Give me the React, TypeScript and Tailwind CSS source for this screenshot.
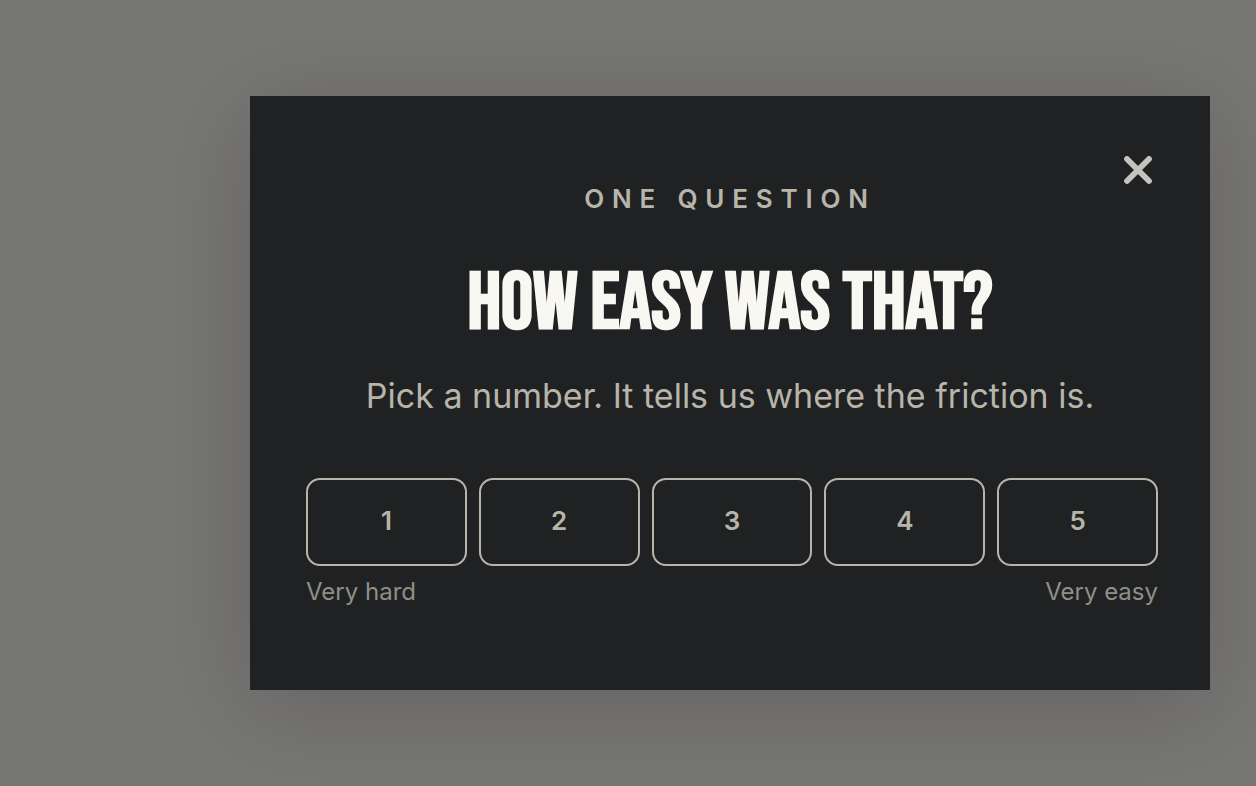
import { useState } from "react";

const scores = [1, 2, 3, 4, 5];

function CloseIcon() {
  return (
    <svg viewBox="0 0 28 28" className="size-7" fill="none" stroke="currentColor" strokeWidth="5.8" strokeLinecap="round" aria-hidden="true">
      <path d="M3 3L25 25M25 3L3 25" />
    </svg>
  );
}

export default function App() {
  const [open, setOpen] = useState(true);
  const [score, setScore] = useState<number | null>(null);

  return (
    <div className="flex min-h-screen items-start justify-end bg-[#777775] py-24 pr-[46px] pl-12 font-['Inter',sans-serif]">
      {open && (
        <section
          role="dialog"
          aria-labelledby="survey-title"
          className="relative w-full max-w-[960px] bg-[#202123] px-[52px] pt-[87px] pb-20 shadow-[0_16px_96px_rgba(20,8,4,0.18)]"
        >
          <button
            type="button"
            aria-label="Close"
            onClick={() => setOpen(false)}
            className="absolute top-[46px] right-11 flex size-14 items-center justify-center text-[#c5c3bd]"
          >
            <CloseIcon />
          </button>

          <p className="text-center text-[26px] leading-8 font-semibold tracking-[0.3em] text-[#b7b5aa] uppercase">
            One question
          </p>
          <h2
            id="survey-title"
            className="mt-[51px] text-center font-['Bebas_Neue','Liberation_Sans_Narrow',sans-serif] text-[80px] leading-[76px] font-bold text-[#f8f7f2] uppercase"
          >
            How easy was that?
          </h2>
          <p className="mt-7 text-center text-[34px] leading-[52px] text-[#b7b5aa]">
            Pick a number. It tells us where the friction is.
          </p>

          <div className="mt-14 pl-1">
            <div role="group" aria-labelledby="survey-title" className="grid grid-cols-5 gap-3">
              {scores.map((n) => (
                <button
                  key={n}
                  type="button"
                  aria-pressed={score === n}
                  onClick={() => setScore(n)}
                  className="h-[88px] rounded-[14px] border-2 border-[#b7b5aa] pb-1 text-[26px] font-semibold text-[#b7b5aa] aria-pressed:bg-[#3a3b3c]"
                >
                  {n}
                </button>
              ))}
            </div>
            <div className="mt-2 flex justify-between text-2xl leading-9 text-[#908f87]">
              <span>Very hard</span>
              <span>Very easy</span>
            </div>
          </div>
        </section>
      )}
    </div>
  );
}
